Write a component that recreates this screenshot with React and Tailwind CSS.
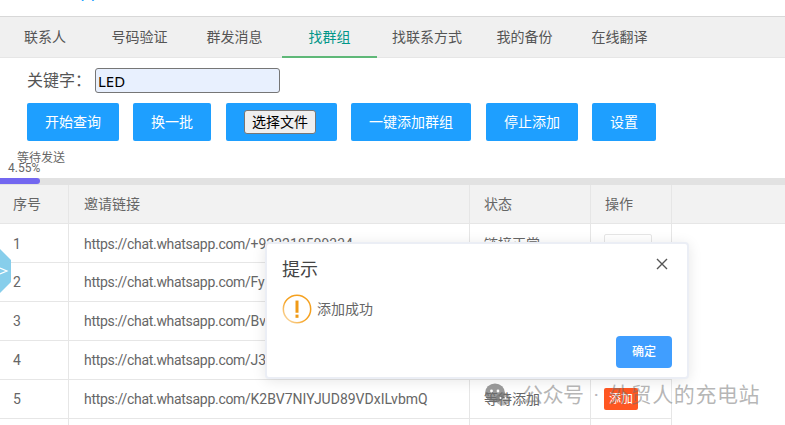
const tabs = [
  { label: '联系人', w: 'w-[92px] pr-[2px]' },
  { label: '号码验证', w: 'w-[95px]' },
  { label: '群发消息', w: 'w-[95px]' },
  { label: '找群组', w: 'w-[95px]', active: true },
  { label: '找联系方式', w: 'w-[100px]' },
  { label: '我的备份', w: 'w-[95px]' },
  { label: '在线翻译', w: 'w-[95px]' },
];

const rows = [
  { id: 1, code: '+923218509334', status: '链接正常', btn: 'ghost' },
  { id: 2, code: 'FyQ2mHt8LbKx0ZrVnE4sPd' },
  { id: 3, code: 'BvT6wXc1RgNaY7uJk3SeOf' },
  { id: 4, code: 'J3pLd9QzHi5MtC2oWyGx8A' },
  { id: 5, code: 'K2BV7NIYJUD89VDxILvbmQ', status: '等待添加', btn: 'add' },
  { id: 6 },
];

const cols = 'grid grid-cols-[69px_401px_121px_81px]';
const cell = 'border-r border-[#e6e6e6] flex items-center';

function ActionButton({ children, className = '' }) {
  return (
    <button className={`h-[38px] bg-[#1e9fff] rounded-[2px] text-white text-[14px] flex items-center justify-center ${className}`}>
      {children}
    </button>
  );
}

function WarnIcon() {
  return (
    <svg width="30" height="30" viewBox="0 0 32 32" className="shrink-0">
      <defs>
        <linearGradient id="ring" x1="1" y1="0" x2="0" y2="1">
          <stop offset="0.55" stopColor="#f5a11f" />
          <stop offset="1" stopColor="#fbe3bd" />
        </linearGradient>
      </defs>
      <circle cx="16" cy="16" r="14.6" fill="none" stroke="url(#ring)" strokeWidth="1.6" />
      <rect x="14.4" y="7" width="3.2" height="13" fill="#f09a16" />
      <rect x="14.4" y="22" width="3.2" height="3.4" fill="#f09a16" />
    </svg>
  );
}

function WechatMark() {
  return (
    <svg width="26" height="24" viewBox="0 0 26 24" className="shrink-0">
      <ellipse cx="10" cy="10" rx="10" ry="9.5" fill="#6e6e6e" fillOpacity="0.7" />
      <circle cx="6.5" cy="8" r="1.4" fill="#fff" />
      <circle cx="13" cy="8" r="1.4" fill="#fff" />
      <ellipse cx="18" cy="16" rx="7.5" ry="6.5" fill="#6e6e6e" fillOpacity="0.5" />
      <circle cx="15.5" cy="15" r="1" fill="#fff" />
      <circle cx="20.5" cy="15" r="1" fill="#fff" />
    </svg>
  );
}

export default function App() {
  return (
    <div className="relative w-[785px] h-[425px] overflow-hidden bg-white text-[#666] font-['Roboto','Noto_Sans_CJK_SC',sans-serif]">
      {/* top strip, only the bottom of the logo text shows */}
      <div className="h-[16px] overflow-hidden pl-[18px]">
        <div className="-mt-[20px] h-[22px] text-[18px] leading-[22px] text-[#1e9fff]">WhatsApp</div>
      </div>

      {/* tabs */}
      <div className="h-[42px] flex border-t border-t-[#d8d8d8] border-b border-b-[#e6e6e6] bg-[#f0f0f0]">
        {tabs.map((t) => (
          <div
            key={t.label}
            className={`${t.w} h-[41px] flex items-center justify-center text-[14px] ${
              t.active ? 'text-[#009688] border-b-2 border-[#5fb878] pt-[2px]' : 'text-[#555]'
            }`}
          >
            {t.label}
          </div>
        ))}
      </div>

      {/* search form */}
      <div className="flex items-center h-[25px] mt-[10px] pl-[27px]">
        <span className="w-[68px] text-[16px] text-[#555]">关键字：</span>
        <input
          defaultValue="LED"
          className="w-[185px] h-[25px] px-[2px] bg-[#e8f0fe] border border-[#767676] rounded-[3px] text-[15px] font-['Noto_Sans',sans-serif] text-black outline-none"
        />
      </div>

      <div className="flex mt-[10px] pl-[27px]">
        <ActionButton className="w-[92px]">开始查询</ActionButton>
        <ActionButton className="w-[78px] ml-[14px]">换一批</ActionButton>
        <ActionButton className="w-[111px] ml-[15px] pr-[3px]">
          <span className="w-[72px] h-[24px] bg-[#efefef] border border-[#767676] rounded-[3px] text-black text-[14px] leading-[22px]">
            选择文件
          </span>
        </ActionButton>
        <ActionButton className="w-[120px] ml-[14px]">一键添加群组</ActionButton>
        <ActionButton className="w-[92px] ml-[15px]">停止添加</ActionButton>
        <ActionButton className="w-[64px] ml-[14px]">设置</ActionButton>
      </div>

      {/* progress */}
      <div className="h-[37px] pt-[11px] text-[12px] leading-[12px] text-[#666]">
        <div className="pl-[17px]">等待发送</div>
        <div className="pl-[8px] -mt-[2px]">4.55%</div>
      </div>
      <div className="h-[7px] bg-[#e2e2e2]">
        <div className="w-[40px] h-[6px] bg-[#7367f0] rounded-r-[3px]" />
      </div>

      {/* table */}
      <div className="flex h-[39px] bg-[#f2f2f2] border-b border-[#e6e6e6] text-[14px] text-[#666]">
        <div className={`${cols} w-[672px] h-[38px]`}>
          <div className={`${cell} pl-[13px]`}>序号</div>
          <div className={`${cell} pl-[15px]`}>邀请链接</div>
          <div className={`${cell} pl-[14px]`}>状态</div>
          <div className={`${cell} pl-[14px]`}>操作</div>
        </div>
      </div>
      {rows.map((r) => (
        <div key={r.id} className={`${cols} w-[672px] h-[39px] border-b border-[#e6e6e6] text-[14px] text-[#666]`}>
          <div className={`${cell} pl-[13px]`}>{r.id}</div>
          <div className={`${cell} pl-[15px] whitespace-nowrap`}>
            {r.code && (
              <span>
                <span className="tracking-[-0.3px]">https://chat.whatsapp.com/</span>
                {r.code}
              </span>
            )}
          </div>
          <div className={`${cell} pl-[14px]`}>{r.status}</div>
          <div className={`${cell} pl-[13px]`}>
            {r.btn === 'ghost' && <span className="w-[48px] h-[30px] self-start mt-[10px] bg-white border border-[#e6e6e6] rounded-[2px]" />}
            {r.btn === 'add' && (
              <span className="w-[34px] h-[22px] bg-[#ff5722] rounded-[2px] text-white text-[12px] leading-[22px] text-center">添加</span>
            )}
          </div>
        </div>
      ))}

      {/* side handle */}
      <div className="absolute left-0 top-[249px] w-[11px] h-[44px] bg-[#87ceeb] [clip-path:polygon(0_0,100%_25%,100%_75%,0_100%)]">
        <svg width="11" height="44" viewBox="0 0 11 44">
          <path d="M0 19 L7 22 L0 25" fill="none" stroke="#fff" strokeWidth="1.2" />
        </svg>
      </div>

      {/* dialog */}
      <div className="absolute left-[265px] top-[242px] w-[424px] h-[137px] bg-white border-2 border-[#ebeef5] rounded-[4px] shadow-[0_2px_14px_rgba(0,0,0,0.1)]">
        <div className="flex items-start justify-between pl-[15px] pr-[19px] pt-[14px]">
          <span className="text-[18px] leading-[24px] text-[#444]">提示</span>
          <svg width="12" height="12" viewBox="0 0 12 12">
            <path d="M1 1 L11 11 M11 1 L1 11" stroke="#555" strokeWidth="1.4" />
          </svg>
        </div>
        <div className="flex items-center gap-[5px] pl-[15px] mt-[12px]">
          <WarnIcon />
          <span className="text-[14px] text-[#666]">添加成功</span>
        </div>
        <div className="absolute right-[15px] bottom-[9px] w-[56px] h-[32px] bg-[#409eff] rounded-[4px] text-white text-[12px] font-medium flex items-center justify-center">
          确定
        </div>
      </div>

      {/* watermark */}
      <div className="absolute left-[485px] top-[381px] flex items-center text-[21px] leading-[28px] text-[rgba(110,110,110,0.5)] pointer-events-none">
        <WechatMark />
        <span className="ml-[11px] tracking-[-0.5px]">公众号</span>
        <span className="mx-[10px]">·</span>
        <span className="tracking-[0.6px]">外贸人的充电站</span>
      </div>
    </div>
  );
}
